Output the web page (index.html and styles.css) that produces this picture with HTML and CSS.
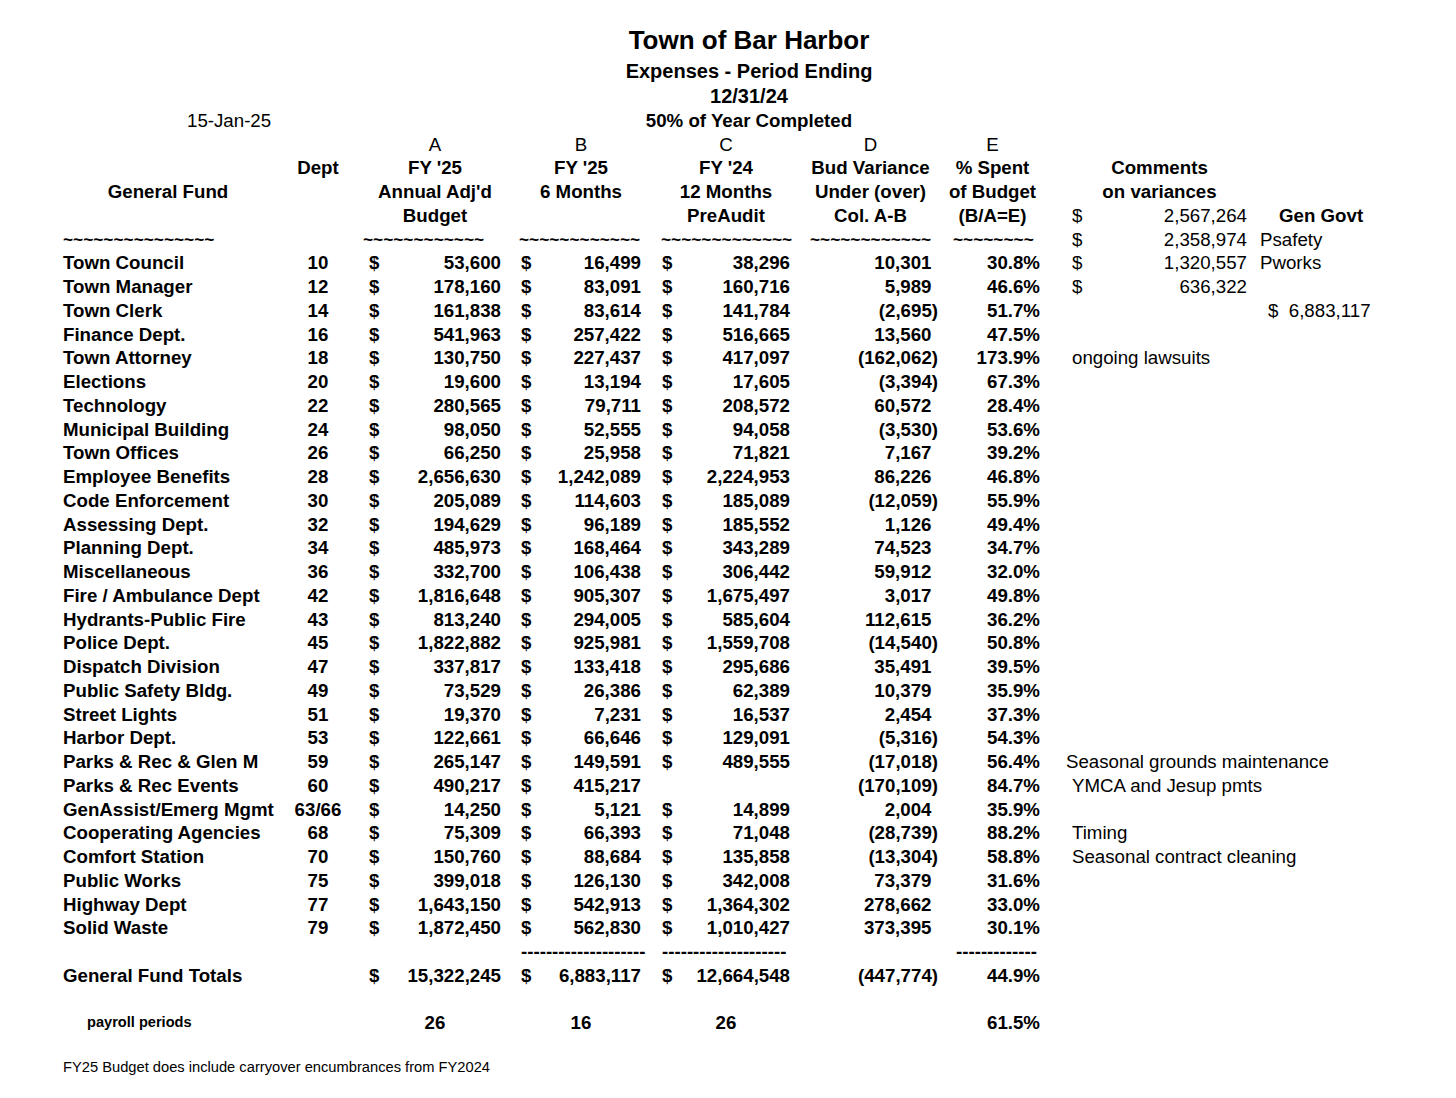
FILE: index.html
```html
<!DOCTYPE html>
<html lang="en">
<head>
<meta charset="utf-8">
<title>Town of Bar Harbor - Expenses</title>
<link rel="stylesheet" href="styles.css">
</head>
<body>
<div class="sheet">
  <div class="title">Town of Bar Harbor</div>
  <div class="subtitle">Expenses - Period Ending</div>
  <div class="date-line">12/31/24</div>
  <div class="pct-line">
    <span class="stamp">15-Jan-25</span>
    <span class="pct-text">50% of Year Completed</span>
  </div>

  <div class="row letters">
    <div class="ca hd">A</div><div class="cb hd">B</div><div class="cc hd">C</div><div class="cd hd">D</div><div class="ce hd">E</div>
  </div>
  <div class="row">
    <div class="dp">Dept</div>
    <div class="ca hd">FY '25</div><div class="cb hd">FY '25</div><div class="cc hd">FY '24</div>
    <div class="cd hd">Bud Variance</div><div class="ce hd">% Spent</div><div class="cf hd">Comments</div>
  </div>
  <div class="row">
    <div class="nm hd gf">General Fund</div>
    <div class="ca hd">Annual Adj'd</div><div class="cb hd">6 Months</div><div class="cc hd">12 Months</div>
    <div class="cd hd">Under (over)</div><div class="ce hd">of Budget</div><div class="cf hd">on variances</div>
  </div>
  <div class="row">
    <div class="ca hd">Budget</div><div class="cc hd">PreAudit</div>
    <div class="cd hd">Col. A-B</div><div class="ce hd">(B/A=E)</div>
    <div class="cf m nrm"><span>$</span><span>2,567,264</span></div><div class="cg lbl gg">Gen Govt</div>
  </div>
  <div class="row">
    <div class="nm tl">~~~~~~~~~~~~~~~</div>
    <div class="ca tl">~~~~~~~~~~~~</div><div class="cb tl">~~~~~~~~~~~~</div><div class="cc tl">~~~~~~~~~~~~~</div>
    <div class="cd tl">~~~~~~~~~~~~</div><div class="ce tl">~~~~~~~~</div>
    <div class="cf m nrm"><span>$</span><span>2,358,974</span></div><div class="cg lbl">Psafety</div>
  </div>

  <div class="row"><div class="nm">Town Council</div><div class="dp">10</div><div class="ca m"><span>$</span><span>53,600</span></div><div class="cb m"><span>$</span><span>16,499</span></div><div class="cc m"><span>$</span><span>38,296</span></div><div class="cd pos">10,301</div><div class="ce">30.8%</div><div class="cf m nrm"><span>$</span><span>1,320,557</span></div><div class="cg lbl">Pworks</div></div>
  <div class="row"><div class="nm">Town Manager</div><div class="dp">12</div><div class="ca m"><span>$</span><span>178,160</span></div><div class="cb m"><span>$</span><span>83,091</span></div><div class="cc m"><span>$</span><span>160,716</span></div><div class="cd pos">5,989</div><div class="ce">46.6%</div><div class="cf m nrm"><span>$</span><span>636,322</span></div></div>
  <div class="row"><div class="nm">Town Clerk</div><div class="dp">14</div><div class="ca m"><span>$</span><span>161,838</span></div><div class="cb m"><span>$</span><span>83,614</span></div><div class="cc m"><span>$</span><span>141,784</span></div><div class="cd">(2,695)</div><div class="ce">51.7%</div><div class="cg grand">$&nbsp;&nbsp;6,883,117</div></div>
  <div class="row"><div class="nm">Finance Dept.</div><div class="dp">16</div><div class="ca m"><span>$</span><span>541,963</span></div><div class="cb m"><span>$</span><span>257,422</span></div><div class="cc m"><span>$</span><span>516,665</span></div><div class="cd pos">13,560</div><div class="ce">47.5%</div></div>
  <div class="row"><div class="nm">Town Attorney</div><div class="dp">18</div><div class="ca m"><span>$</span><span>130,750</span></div><div class="cb m"><span>$</span><span>227,437</span></div><div class="cc m"><span>$</span><span>417,097</span></div><div class="cd">(162,062)</div><div class="ce">173.9%</div><div class="note">ongoing lawsuits</div></div>
  <div class="row"><div class="nm">Elections</div><div class="dp">20</div><div class="ca m"><span>$</span><span>19,600</span></div><div class="cb m"><span>$</span><span>13,194</span></div><div class="cc m"><span>$</span><span>17,605</span></div><div class="cd">(3,394)</div><div class="ce">67.3%</div></div>
  <div class="row"><div class="nm">Technology</div><div class="dp">22</div><div class="ca m"><span>$</span><span>280,565</span></div><div class="cb m"><span>$</span><span>79,711</span></div><div class="cc m"><span>$</span><span>208,572</span></div><div class="cd pos">60,572</div><div class="ce">28.4%</div></div>
  <div class="row"><div class="nm">Municipal Building</div><div class="dp">24</div><div class="ca m"><span>$</span><span>98,050</span></div><div class="cb m"><span>$</span><span>52,555</span></div><div class="cc m"><span>$</span><span>94,058</span></div><div class="cd">(3,530)</div><div class="ce">53.6%</div></div>
  <div class="row"><div class="nm">Town Offices</div><div class="dp">26</div><div class="ca m"><span>$</span><span>66,250</span></div><div class="cb m"><span>$</span><span>25,958</span></div><div class="cc m"><span>$</span><span>71,821</span></div><div class="cd pos">7,167</div><div class="ce">39.2%</div></div>
  <div class="row"><div class="nm">Employee Benefits</div><div class="dp">28</div><div class="ca m"><span>$</span><span>2,656,630</span></div><div class="cb m"><span>$</span><span>1,242,089</span></div><div class="cc m"><span>$</span><span>2,224,953</span></div><div class="cd pos">86,226</div><div class="ce">46.8%</div></div>
  <div class="row"><div class="nm">Code Enforcement</div><div class="dp">30</div><div class="ca m"><span>$</span><span>205,089</span></div><div class="cb m"><span>$</span><span>114,603</span></div><div class="cc m"><span>$</span><span>185,089</span></div><div class="cd">(12,059)</div><div class="ce">55.9%</div></div>
  <div class="row"><div class="nm">Assessing Dept.</div><div class="dp">32</div><div class="ca m"><span>$</span><span>194,629</span></div><div class="cb m"><span>$</span><span>96,189</span></div><div class="cc m"><span>$</span><span>185,552</span></div><div class="cd pos">1,126</div><div class="ce">49.4%</div></div>
  <div class="row"><div class="nm">Planning Dept.</div><div class="dp">34</div><div class="ca m"><span>$</span><span>485,973</span></div><div class="cb m"><span>$</span><span>168,464</span></div><div class="cc m"><span>$</span><span>343,289</span></div><div class="cd pos">74,523</div><div class="ce">34.7%</div></div>
  <div class="row"><div class="nm">Miscellaneous</div><div class="dp">36</div><div class="ca m"><span>$</span><span>332,700</span></div><div class="cb m"><span>$</span><span>106,438</span></div><div class="cc m"><span>$</span><span>306,442</span></div><div class="cd pos">59,912</div><div class="ce">32.0%</div></div>
  <div class="row"><div class="nm">Fire / Ambulance Dept</div><div class="dp">42</div><div class="ca m"><span>$</span><span>1,816,648</span></div><div class="cb m"><span>$</span><span>905,307</span></div><div class="cc m"><span>$</span><span>1,675,497</span></div><div class="cd pos">3,017</div><div class="ce">49.8%</div></div>
  <div class="row"><div class="nm">Hydrants-Public Fire</div><div class="dp">43</div><div class="ca m"><span>$</span><span>813,240</span></div><div class="cb m"><span>$</span><span>294,005</span></div><div class="cc m"><span>$</span><span>585,604</span></div><div class="cd pos">112,615</div><div class="ce">36.2%</div></div>
  <div class="row"><div class="nm">Police Dept.</div><div class="dp">45</div><div class="ca m"><span>$</span><span>1,822,882</span></div><div class="cb m"><span>$</span><span>925,981</span></div><div class="cc m"><span>$</span><span>1,559,708</span></div><div class="cd">(14,540)</div><div class="ce">50.8%</div></div>
  <div class="row"><div class="nm">Dispatch Division</div><div class="dp">47</div><div class="ca m"><span>$</span><span>337,817</span></div><div class="cb m"><span>$</span><span>133,418</span></div><div class="cc m"><span>$</span><span>295,686</span></div><div class="cd pos">35,491</div><div class="ce">39.5%</div></div>
  <div class="row"><div class="nm">Public Safety Bldg.</div><div class="dp">49</div><div class="ca m"><span>$</span><span>73,529</span></div><div class="cb m"><span>$</span><span>26,386</span></div><div class="cc m"><span>$</span><span>62,389</span></div><div class="cd pos">10,379</div><div class="ce">35.9%</div></div>
  <div class="row"><div class="nm">Street Lights</div><div class="dp">51</div><div class="ca m"><span>$</span><span>19,370</span></div><div class="cb m"><span>$</span><span>7,231</span></div><div class="cc m"><span>$</span><span>16,537</span></div><div class="cd pos">2,454</div><div class="ce">37.3%</div></div>
  <div class="row"><div class="nm">Harbor Dept.</div><div class="dp">53</div><div class="ca m"><span>$</span><span>122,661</span></div><div class="cb m"><span>$</span><span>66,646</span></div><div class="cc m"><span>$</span><span>129,091</span></div><div class="cd">(5,316)</div><div class="ce">54.3%</div></div>
  <div class="row"><div class="nm">Parks &amp; Rec &amp; Glen M</div><div class="dp">59</div><div class="ca m"><span>$</span><span>265,147</span></div><div class="cb m"><span>$</span><span>149,591</span></div><div class="cc m"><span>$</span><span>489,555</span></div><div class="cd">(17,018)</div><div class="ce">56.4%</div><div class="note wide">Seasonal grounds maintenance</div></div>
  <div class="row"><div class="nm">Parks &amp; Rec Events</div><div class="dp">60</div><div class="ca m"><span>$</span><span>490,217</span></div><div class="cb m"><span>$</span><span>415,217</span></div><div class="cd">(170,109)</div><div class="ce">84.7%</div><div class="note">YMCA and Jesup pmts</div></div>
  <div class="row"><div class="nm">GenAssist/Emerg Mgmt</div><div class="dp">63/66</div><div class="ca m"><span>$</span><span>14,250</span></div><div class="cb m"><span>$</span><span>5,121</span></div><div class="cc m"><span>$</span><span>14,899</span></div><div class="cd pos">2,004</div><div class="ce">35.9%</div></div>
  <div class="row"><div class="nm">Cooperating Agencies</div><div class="dp">68</div><div class="ca m"><span>$</span><span>75,309</span></div><div class="cb m"><span>$</span><span>66,393</span></div><div class="cc m"><span>$</span><span>71,048</span></div><div class="cd">(28,739)</div><div class="ce">88.2%</div><div class="note">Timing</div></div>
  <div class="row"><div class="nm">Comfort Station</div><div class="dp">70</div><div class="ca m"><span>$</span><span>150,760</span></div><div class="cb m"><span>$</span><span>88,684</span></div><div class="cc m"><span>$</span><span>135,858</span></div><div class="cd">(13,304)</div><div class="ce">58.8%</div><div class="note">Seasonal contract cleaning</div></div>
  <div class="row"><div class="nm">Public Works</div><div class="dp">75</div><div class="ca m"><span>$</span><span>399,018</span></div><div class="cb m"><span>$</span><span>126,130</span></div><div class="cc m"><span>$</span><span>342,008</span></div><div class="cd pos">73,379</div><div class="ce">31.6%</div></div>
  <div class="row"><div class="nm">Highway Dept</div><div class="dp">77</div><div class="ca m"><span>$</span><span>1,643,150</span></div><div class="cb m"><span>$</span><span>542,913</span></div><div class="cc m"><span>$</span><span>1,364,302</span></div><div class="cd pos">278,662</div><div class="ce">33.0%</div></div>
  <div class="row"><div class="nm">Solid Waste</div><div class="dp">79</div><div class="ca m"><span>$</span><span>1,872,450</span></div><div class="cb m"><span>$</span><span>562,830</span></div><div class="cc m"><span>$</span><span>1,010,427</span></div><div class="cd pos">373,395</div><div class="ce">30.1%</div></div>

  <div class="row">
    <div class="cb ds">--------------------</div><div class="cc ds">--------------------</div><div class="ce ds">-------------</div>
  </div>
  <div class="row"><div class="nm">General Fund Totals</div><div class="ca m"><span>$</span><span>15,322,245</span></div><div class="cb m"><span>$</span><span>6,883,117</span></div><div class="cc m"><span>$</span><span>12,664,548</span></div><div class="cd">(447,774)</div><div class="ce">44.9%</div></div>
  <div class="row"></div>
  <div class="row"><div class="nm pp">payroll periods</div><div class="ca hd">26</div><div class="cb hd">16</div><div class="cc hd">26</div><div class="ce">61.5%</div></div>
  <div class="row"></div>
  <div class="footnote">FY25 Budget does include carryover encumbrances from FY2024</div>
</div>
</body>
</html>
```

FILE: styles.css
```css
body {
  margin: 0;
  background: #ffffff;
  color: #000000;
  font-family: "Liberation Sans", Arial, Helvetica, sans-serif;
}

.sheet {
  width: 1372px;
  padding: 24px 0 0 63px;
  font-size: 18.7px;
  font-weight: bold;
}

.title {
  text-align: center;
  font-size: 26px;
  line-height: 33px;
}

.subtitle {
  text-align: center;
  font-size: 20px;
  line-height: 28px;
}

.date-line {
  text-align: center;
  font-size: 20px;
  line-height: 23.75px;
}

.pct-line {
  display: grid;
  line-height: 23.75px;
}

.pct-line > span {
  grid-area: 1 / 1;
}

.stamp {
  justify-self: start;
  padding-left: 124px;
  font-weight: normal;
}

.pct-text {
  justify-self: center;
}

.row {
  display: grid;
  grid-template-columns: 227px 56px 165px 140px 146px 145px 102px 210px 181px;
  grid-template-rows: 23.75px;
  height: 23.75px;
  line-height: 23.75px;
  white-space: nowrap;
}

.letters {
  font-weight: normal;
}

.nm { grid-column: 1; }
.dp { grid-column: 2; text-align: center; }
.ca { grid-column: 3; padding: 0 10px 0 23px; }
.cb { grid-column: 4; padding: 0 10px 0 10px; }
.cc { grid-column: 5; padding: 0 7px 0 11px; }
.cd { grid-column: 6; padding: 0 4px 0 6px; text-align: right; }
.ce { grid-column: 7; padding: 0 4px 0 3px; text-align: right; }
.cf { grid-column: 8; padding: 0 7px 0 28px; }
.cg { grid-column: 9; }

.row .hd { text-align: center; }
.row .gf { padding-right: 17px; }

.m {
  display: flex;
  justify-content: space-between;
}

.row .pos { padding-right: 10.5px; }

.nrm { font-weight: normal; }

.lbl {
  padding-left: 6px;
  font-weight: normal;
}

.lbl.gg {
  padding-left: 25px;
  font-weight: bold;
}

.grand {
  padding-left: 14px;
  font-weight: normal;
}

.note {
  grid-column: 8 / span 2;
  padding-left: 28px;
  font-weight: normal;
}

.note.wide { padding-left: 22px; }

.tl {
  font-weight: bold;
  font-size: 17.3px;
  text-align: left;
}

.row .tl.ca { padding: 0 0 0 17px; }
.row .tl.cb { padding: 0 0 0 8px; }
.row .tl.cc { padding: 0 0 0 10px; }
.row .tl.cd { padding: 0 0 0 13px; text-align: left; }
.row .tl.ce { padding: 0 0 0 11px; text-align: left; }

.ds {
  text-align: left;
}

.row .ds.ce { padding: 0 0 0 14px; text-align: left; }

.pp {
  padding-left: 24px;
  font-size: 14.6px;
}

.footnote {
  font-size: 14.7px;
  font-weight: normal;
  line-height: 23.75px;
  margin-top: -3px;
}
```
